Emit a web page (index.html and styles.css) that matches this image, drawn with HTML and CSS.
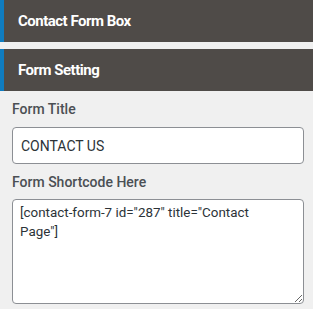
FILE: index.html
```html
<!DOCTYPE html>
<html>
<head>
<meta charset="utf-8">
<link rel="stylesheet" href="styles.css">
</head>
<body>
<div class="bar bar-first">Contact Form Box</div>
<div class="bar bar-second">Form Setting</div>
<div class="panel">
  <label class="label" for="title">Form Title</label>
  <input class="field" id="title" type="text" value="CONTACT US">
  <label class="label label-second" for="code">Form Shortcode Here</label>
  <textarea class="area" id="code">[contact-form-7 id="287" title="Contact Page"]</textarea>
</div>
</body>
</html>
```
FILE: styles.css
```css
html, body {
  margin: 0;
  padding: 0;
  background: #f0f0f0;
  font-family: Roboto, "Liberation Sans", sans-serif;
}
.bar {
  height: 42px;
  box-sizing: border-box;
  background: #4f4b48;
  border-left: 4px solid #0f7cc0;
  color: #ffffff;
  font-size: 15px;
  font-weight: 700;
  padding-left: 14px;
  display: flex;
  align-items: center;
  letter-spacing: -0.5px;
}
.bar-second {
  margin-top: 7px;
}
.panel {
  display: flex;
  flex-direction: column;
  padding: 8px 9px 0 12px;
}
.label {
  color: #4b4f54;
  font-size: 14px;
  font-weight: 500;
  line-height: 20px;
  margin-bottom: 8px;
}
.label-second {
  margin-top: 8px;
  margin-bottom: 7px;
}
.field {
  box-sizing: border-box;
  height: 37px;
  border: 1px solid #8c8f94;
  border-radius: 4px;
  background: #ffffff;
  font-family: Roboto, "Liberation Sans", sans-serif;
  font-size: 14px;
  color: #2c3338;
  padding: 0 8px;
  margin: 0;
  outline: none;
}
.area {
  box-sizing: border-box;
  height: 105px;
  border: 1px solid #8c8f94;
  border-radius: 4px;
  background: #ffffff;
  font-family: Roboto, "Liberation Sans", sans-serif;
  font-size: 13.4px;
  line-height: 18.5px;
  color: #2c3338;
  padding: 4px 14px 4px 7px;
  margin: 0;
  resize: vertical;
  outline: none;
}
```
